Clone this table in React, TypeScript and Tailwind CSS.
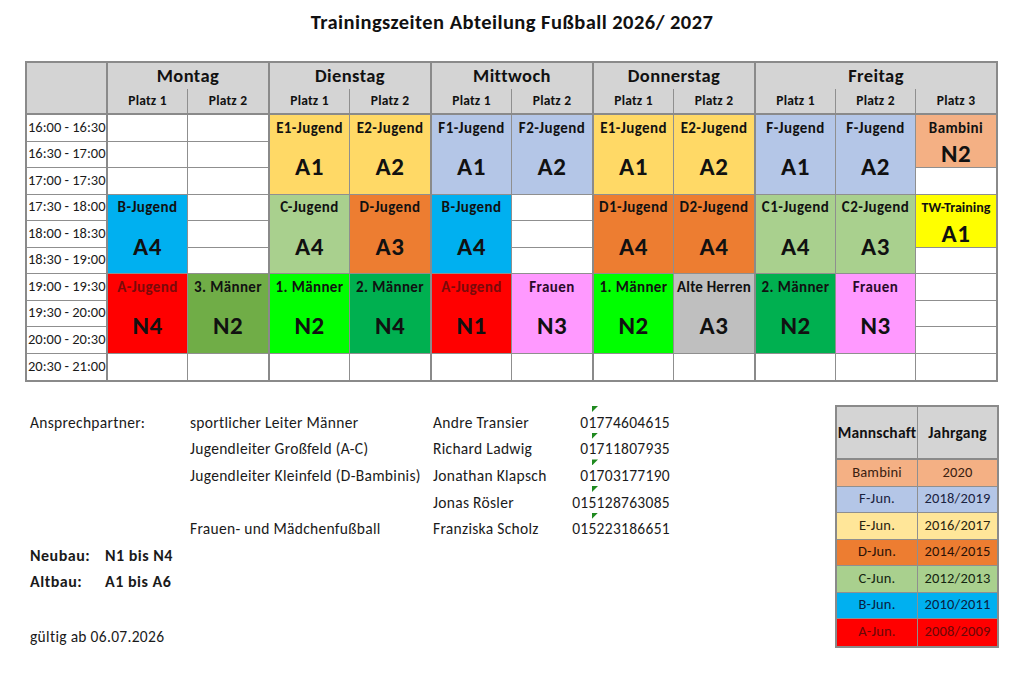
import React from 'react';

type Cell = { span: 1 | 2 | 3; label?: string; code?: string; bg?: string; lc?: string; ls?: string };

const e: Cell = { span: 1 };
const b = (
  span: 1 | 2 | 3,
  label: string,
  code: string,
  bg: string,
  lc = 'text-[#111]',
  ls = 'text-[15px] tracking-[0.4px]'
): Cell => ({ span, label, code, bg, lc, ls });

const Y = 'bg-[#ffd966]';
const FB = 'bg-[#b4c6e7]';
const BB = 'bg-[#00b0f0]';
const CG = 'bg-[#a9d08e]';
const DO = 'bg-[#ed7d31]';
const AR = 'bg-[#ff0000]';
const M3 = 'bg-[#70ad47]';
const M1 = 'bg-[#00ff00]';
const M2 = 'bg-[#00b050]';
const FR = 'bg-[#ff99ff]';
const AH = 'bg-[#bfbfbf]';
const BA = 'bg-[#f4b084]';
const TW = 'bg-[#ffff00]';
const RED = 'text-[#7a0a0a]';
const DK = 'text-[#111]';

const heights: Record<number, string> = { 1: 'h-[26.5px]', 2: 'h-[53px]', 3: 'h-[79.5px]' };
const labelH: Record<number, string> = { 1: 'h-[26.5px]', 2: 'h-[26px]', 3: 'h-[26px]' };

const days: { name: string; cols: Cell[][] }[] = [
  {
    name: 'Montag',
    cols: [
      [e, e, e, b(3, 'B-Jugend', 'A4', BB), b(3, 'A-Jugend', 'N4', AR, RED), e],
      [e, e, e, e, e, e, b(3, '3. Männer', 'N2', M3), e],
    ],
  },
  {
    name: 'Dienstag',
    cols: [
      [b(3, 'E1-Jugend', 'A1', Y), b(3, 'C-Jugend', 'A4', CG), b(3, '1. Männer', 'N2', M1), e],
      [b(3, 'E2-Jugend', 'A2', Y), b(3, 'D-Jugend', 'A3', DO), b(3, '2. Männer', 'N4', M2), e],
    ],
  },
  {
    name: 'Mittwoch',
    cols: [
      [b(3, 'F1-Jugend', 'A1', FB), b(3, 'B-Jugend', 'A4', BB), b(3, 'A-Jugend', 'N1', AR, RED), e],
      [b(3, 'F2-Jugend', 'A2', FB), e, e, e, b(3, 'Frauen', 'N3', FR, 'text-[#2a0a2a]'), e],
    ],
  },
  {
    name: 'Donnerstag',
    cols: [
      [b(3, 'E1-Jugend', 'A1', Y), b(3, 'D1-Jugend', 'A4', DO), b(3, '1. Männer', 'N2', M1), e],
      [
        b(3, 'E2-Jugend', 'A2', Y),
        b(3, 'D2-Jugend', 'A4', DO),
        b(3, 'Alte Herren', 'A3', AH, DK, 'text-[15px] tracking-[0.2px]'),
        e,
      ],
    ],
  },
  {
    name: 'Freitag',
    cols: [
      [b(3, 'F-Jugend', 'A1', FB), b(3, 'C1-Jugend', 'A4', CG), b(3, '2. Männer', 'N2', M2), e],
      [b(3, 'F-Jugend', 'A2', FB), b(3, 'C2-Jugend', 'A3', CG), b(3, 'Frauen', 'N3', FR, 'text-[#2a0a2a]'), e],
      [
        b(2, 'Bambini', 'N2', BA),
        e,
        b(2, 'TW-Training', 'A1', TW, DK, 'text-[14px] tracking-[0px]'),
        e,
        e,
        e,
        e,
        e,
      ],
    ],
  },
];

const times = [
  '16:00 - 16:30',
  '16:30 - 17:00',
  '17:00 - 17:30',
  '17:30 - 18:00',
  '18:00 - 18:30',
  '18:30 - 19:00',
  '19:00 - 19:30',
  '19:30 - 20:00',
  '20:00 - 20:30',
  '20:30 - 21:00',
];

const legend = [
  { m: 'Bambini', j: '2020', bg: 'bg-[#f4b084]', t: 'text-[#3a2010]' },
  { m: 'F-Jun.', j: '2018/2019', bg: 'bg-[#b4c6e7]', t: 'text-[#1a2240]' },
  { m: 'E-Jun.', j: '2016/2017', bg: 'bg-[#ffe699]', t: 'text-[#2a2410]' },
  { m: 'D-Jun.', j: '2014/2015', bg: 'bg-[#ed7d31]', t: 'text-[#2a1208]' },
  { m: 'C-Jun.', j: '2012/2013', bg: 'bg-[#a9d08e]', t: 'text-[#142410]' },
  { m: 'B-Jun.', j: '2010/2011', bg: 'bg-[#00b0f0]', t: 'text-[#0a2040]' },
  { m: 'A-Jun.', j: '2008/2009', bg: 'bg-[#ff0000]', t: 'text-[#6a0808]' },
];

const contacts = [
  { role: 'sportlicher Leiter Männer', name: 'Andre Transier', tel: '01774604615', first: 'Ansprechpartner:' },
  { role: 'Jugendleiter Großfeld (A-C)', name: 'Richard Ladwig', tel: '01711807935' },
  { role: 'Jugendleiter Kleinfeld (D-Bambinis)', name: 'Jonathan Klapsch', tel: '01703177190' },
  { role: '', name: 'Jonas Rösler', tel: '015128763085' },
  { role: 'Frauen- und Mädchenfußball', name: 'Franziska Scholz', tel: '015223186651' },
];

function BodyCell({ c }: { c: Cell }) {
  const base = `${heights[c.span]} border-b border-[#8f8f8f] last:border-b-0 flex flex-col`;
  if (!c.label) return <div className={`${base} bg-white`} />;
  return (
    <div className={`${base} ${c.bg}`}>
      <div className={`${labelH[c.span]} flex items-center justify-center font-bold whitespace-nowrap ${c.ls} ${c.lc}`}>
        {c.label}
      </div>
      <div className="flex-1 flex items-center justify-center text-[25px] tracking-[0.5px] font-bold text-[#111] leading-none pb-[1px]">
        {c.code}
      </div>
    </div>
  );
}

export default function App() {
  return (
    <div className="w-[1024px] h-[682px] bg-white text-[#1a1a1a] font-['Carlito','Lato',sans-serif] overflow-hidden">
      <div className="h-[61px] pt-[9px] flex justify-center">
        <div className="text-[20.5px] font-bold leading-[27px] text-[#111] tracking-[0.45px]">
          Trainingszeiten Abteilung Fußball 2026/ 2027
        </div>
      </div>

      {/* Main table */}
      <div className="ml-[25px] flex w-max border-l-2 border-t-2 border-b-2 border-[#8a8a8a]">
        <div className="w-[81px] border-r-2 border-[#8a8a8a] flex flex-col">
          <div className="h-[52px] bg-[#d4d4d4] border-b-2 border-[#8a8a8a]" />
          {times.map((t) => (
            <div
              key={t}
              className="h-[26.5px] border-b border-[#8f8f8f] last:border-b-0 flex items-center pl-[1px] text-[14.5px] whitespace-nowrap"
            >
              {t}
            </div>
          ))}
        </div>
        {days.map((d) => (
          <div key={d.name} className="flex flex-col border-r-2 border-[#8a8a8a]">
            <div className="h-[26px] bg-[#d4d4d4] flex items-center justify-center text-[18.5px] tracking-[0.4px] font-bold text-[#111]">
              {d.name}
            </div>
            <div className="h-[26px] bg-[#d4d4d4] flex border-b-2 border-[#8a8a8a]">
              {d.cols.map((_, i) => (
                <div
                  key={i}
                  className="w-[80px] border-r border-[#8f8f8f] last:border-r-0 flex items-center justify-center text-[13.5px] tracking-[0.2px] font-bold text-[#111]"
                >
                  Platz {i + 1}
                </div>
              ))}
            </div>
            <div className="flex">
              {d.cols.map((col, i) => (
                <div key={i} className="w-[80px] border-r border-[#8f8f8f] last:border-r-0 flex flex-col">
                  {col.map((c, j) => (
                    <BodyCell key={j} c={c} />
                  ))}
                </div>
              ))}
            </div>
          </div>
        ))}
      </div>

      {/* Lower section */}
      <div className="flex mt-[23px]">
        <div className="w-[835px] pl-[30px] pt-[4px] flex flex-col text-[15.5px] tracking-[0.3px] text-[#1a1a1a]">
          {contacts.map((c, i) => (
            <div key={i} className="h-[26.7px] flex items-center whitespace-nowrap">
              <div className="w-[160px]">{c.first ?? ''}</div>
              <div className="w-[243px]">{c.role}</div>
              <div className="w-[127px]">{c.name}</div>
              <div className="w-[110px] relative h-full flex items-center justify-end">
                <span
                  className="absolute left-[32px] top-[-3px] w-[6px] h-[6px] bg-[#1f8a1f]"
                  style={{ clipPath: 'polygon(0 0, 100% 0, 0 100%)' }}
                />
                {c.tel}
              </div>
            </div>
          ))}
          <div className="h-[26.7px] flex items-center font-bold text-[16px] tracking-[0.5px]">
            <div className="w-[75px]">Neubau:</div>
            <div>N1 bis N4</div>
          </div>
          <div className="h-[26.7px] flex items-center font-bold text-[16px] tracking-[0.5px]">
            <div className="w-[75px]">Altbau:</div>
            <div>A1 bis A6</div>
          </div>
          <div className="h-[26.7px]" />
          <div className="h-[26.7px] flex items-center pt-[2px]">gültig ab 06.07.2026</div>
        </div>

        <div className="w-[164px] border-2 border-[#8a8a8a] flex flex-col self-start">
          <div className="h-[53px] bg-[#d4d4d4] flex border-b-2 border-[#8a8a8a]">
            <div className="w-[81px] border-r border-[#8f8f8f] flex items-center justify-center text-[15.5px] font-bold text-[#111] tracking-[0.2px]">
              Mannschaft
            </div>
            <div className="flex-1 flex items-center justify-center text-[15.5px] tracking-[0.2px] font-bold text-[#111]">
              Jahrgang
            </div>
          </div>
          {legend.map((l) => (
            <div
              key={l.m}
              className={`h-[26.5px] flex border-b border-[#8f8f8f] last:border-b-0 ${l.bg} ${l.t} text-[14.5px] tracking-[0.2px]`}
            >
              <div className="w-[81px] border-r border-[#8f8f8f] flex items-center justify-center">{l.m}</div>
              <div className="flex-1 flex items-center justify-center">{l.j}</div>
            </div>
          ))}
        </div>
      </div>
    </div>
  );
}
